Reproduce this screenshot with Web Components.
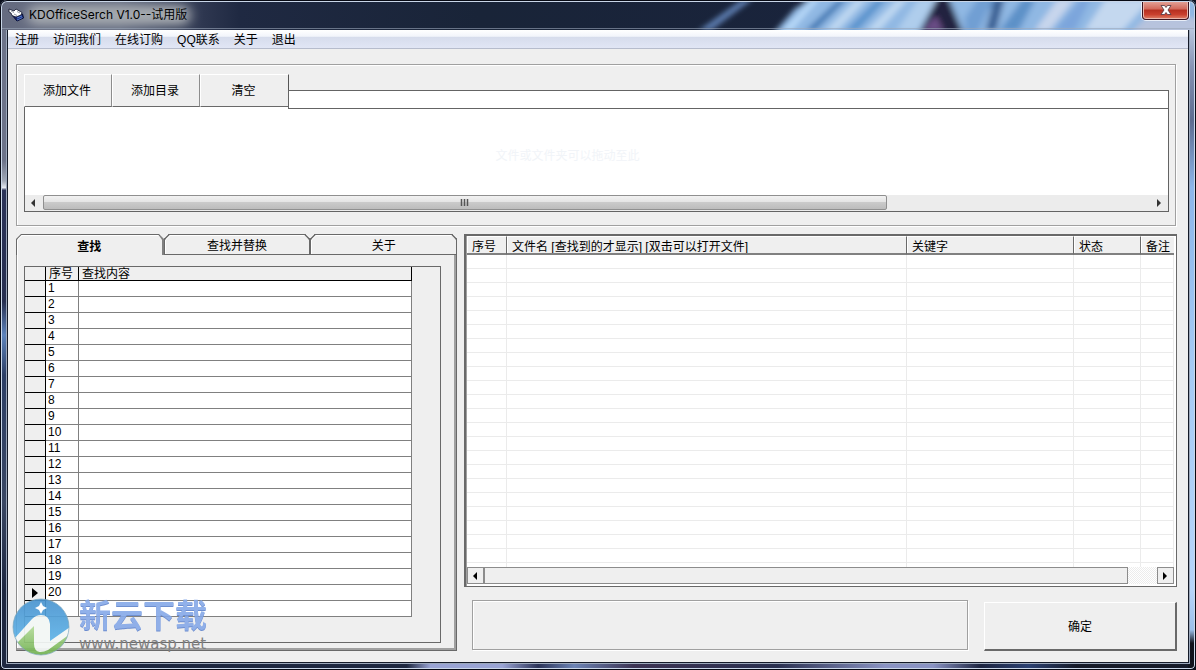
<!DOCTYPE html>
<html lang="zh-CN">
<head>
<meta charset="utf-8">
<title>KDOfficeSerch V1.0--试用版</title>
<style>
html{background:#0b0f1c}
body{margin:0;font:12px/16px "Liberation Sans","Noto Sans CJK SC",sans-serif;color:#000}
</style>
</head>
<body>
<kd-window>
  <kd-titlebar slot="title">KDOfficeSerch V1.0--试用版</kd-titlebar>
  <kd-menubar slot="menu" items="注册,访问我们,在线订购,QQ联系,关于,退出"></kd-menubar>
  <kd-file-group></kd-file-group>
  <kd-columns>
    <kd-tabs><kd-search-grid></kd-search-grid></kd-tabs>
    <kd-results slot="side"></kd-results>
    <kd-actions slot="side"></kd-actions>
  </kd-columns>
  <kd-watermark slot="overlay"></kd-watermark>
</kd-window>
<script>
const base = `*{box-sizing:border-box}button,input{font:inherit;color:inherit;margin:0;border-radius:0}`;
function define(name, render) {
  customElements.define(name, class extends HTMLElement {
    constructor() { super(); this.attachShadow({mode: "open"}); }
    connectedCallback() { this.shadowRoot.innerHTML = `<style>${base}</style>` + render(this); }
  });
}

define("kd-window", () => `
<style>
:host{display:flex;flex-direction:column;position:relative;min-height:100vh;box-sizing:border-box;padding:0 8px 8px;
 border-radius:7px 7px 5px 5px;overflow:hidden;
 background:
  linear-gradient(#6c7389 0 24%,#a0a8b6 27%,#e4e9f1 28%,#2b3358 28.4%,#272f50 45%,#5d83bb 50%,#2d3f66 56%,#3a4763 75%,#1d2740 88%) left/8px 100% no-repeat,
  linear-gradient(#c3d2e8 0 3%,#8693b4 10%,#5d6c90 18%,#8cb6ea 28%,#a5cbf5 55%,#b6d5fa 88%,#9cc0ea 94%,#10131d 96%) right/8px 100% no-repeat,
  linear-gradient(90deg,#1d2740 0 34%,#9aa4d4 36% 42%,#2b3358 45%,#6d84b5 48%,#3c3353 53%,#2a3050 65%,#8a93c3 74% 78%,#1c2440 82%,#2c4172 86%,#151a29 90%);}
.client{display:flex;flex-direction:column;flex:1;background:#efefef;outline:1px solid #141a28;box-shadow:0 0 0 2px #9ba7ba}
.content{display:flex;flex-direction:column;gap:8px;padding:15px 11px 11px 8px;flex:1}
.edge{position:absolute;inset:0;border:1px solid #070a14;border-radius:7px 7px 5px 5px;box-shadow:inset 0 0 0 1px #c9d6e8;pointer-events:none}
</style>
<slot name="title"></slot>
<main class="client"><slot name="menu"></slot><div class="content"><slot></slot></div></main>
<slot name="overlay"></slot><div class="edge"></div>`);

define("kd-titlebar", () => `
<style>
:host{display:flex;position:relative;height:30px;margin:0 -8px;padding-left:8px;align-items:center;font-family:Inter,"Noto Sans CJK SC",sans-serif;background:#1a2438}
.sky{position:absolute;inset:0;width:100%;height:100%}
.app{position:relative;width:16px;height:16px;margin-right:5px}
h1{position:relative;margin:0;font-size:12px;font-weight:400;line-height:20px}
button{position:absolute;right:7px;top:1px;width:47px;height:19px;padding:0;border:1px solid #3d1520;border-top:0;border-radius:0 0 4px 4px;
 box-shadow:inset 0 0 0 1px #e9b5ab,0 0 0 1px #e8eef8;background:linear-gradient(#e5a79c,#d2685a 45%,#b52f20 50%,#c9402e 75%,#e0826a);display:flex;justify-content:center;align-items:center}
</style>
<svg class="sky" viewBox="0 0 1196 30" preserveAspectRatio="none" aria-hidden="true">
<defs>
 <linearGradient id="b"><stop offset="0" stop-color="#656b80"/><stop offset=".1" stop-color="#656d81"/><stop offset=".17" stop-color="#2e3750"/><stop offset=".2" stop-color="#1f2942"/><stop offset=".4" stop-color="#192438"/><stop offset="1" stop-color="#1a2340"/></linearGradient>
 <filter id="g" x="-10%" width="120%" y="-60%" height="220%"><feGaussianBlur stdDeviation="6 4"/></filter>
 <filter id="f" x="-5%" width="110%" y="-50%" height="200%"><feGaussianBlur stdDeviation="3 2"/></filter>
</defs>
<rect width="1196" height="30" fill="url(#b)"/>
<rect x="28" y="5" width="162" height="20" rx="8" fill="#a3a7ae" filter="url(#g)"/>
<g filter="url(#f)">
 <path d="M699 30L741 0H752L712 30Z" fill="#5877a8"/>
 <path d="M773 34L806-4H1200V34Z" fill="#90b8e3"/>
 <path d="M783 30L812 0H818L792 30Z" fill="#b9daf9"/>
 <path d="M797 0H809L797 9Z" fill="#202340"/>
 <path d="M806 30L838 0H846L816 30Z" fill="#477cb6"/>
 <path d="M826 30L856 0H866L838 30ZM867 30L897 0H907L880 30Z" fill="#bdd7f1"/>
 <path d="M846 30L876 0H886L858 30Z" fill="#5c94ce"/>
 <path d="M897 30L918 0H936L918 30Z" fill="#afcdec"/>
 <path d="M919 33L938-3H948L963 33Z" fill="#242441"/>
 <path d="M923 30L936 15L943 30Z" fill="#6b4e86"/>
 <path d="M965 18L978-2H1010L988 10L978 32H965Z" fill="#719fd3"/>
 <path d="M986 30L994 0H1004L996 30Z" fill="#365b91"/>
 <path d="M1000 30L1022 0H1035L1019 30Z" fill="#5d91c8"/>
 <path d="M1035 30L1057 0H1074L1050 30Z" fill="#c7d5ec"/>
 <path d="M1055 30L1080 0H1090L1075 30Z" fill="#7ca5dc"/>
 <path d="M1085 30L1105 0H1150L1123 30Z" fill="#c4d8ef"/>
 <path d="M1130 34L1145 18H1200V34Z" fill="#b7c3dd"/>
</g>
<path d="M0 28.5H1196" stroke="#9ba7ba" opacity=".6"/>
</svg>
<svg class="app" viewBox="0 0 16 16" aria-hidden="true">
 <path d="M4 8L9 14L15.500 11L14.500 7L8 9Z" fill="#17246e" stroke="#070d36"/>
 <path d="M1 2L6 4L8 2L14 5.500L13 8L8 10L4 8.500L3 6L1 5Z" fill="#fff" stroke="#11162e" stroke-width=".8"/>
 <path d="M3 4L6 5.500M9 4.500L12 6M6 7L9 8.500" stroke="#68717f" stroke-width=".7"/>
 <path d="M9 11L14 9M9 13L14.500 10.500" stroke="#527cd0"/>
</svg>
<h1><slot></slot></h1>
<button type="button" aria-label="关闭"><svg width="12" height="10" viewBox="0 0 12 10"><path d="M1 .5H4.500L6 2.500L7.500.5H11L8 5L11 9.500H7.500L6 7.500L4.500 9.500H1L4 5Z" fill="#fff" stroke="#4b3340" stroke-width=".8"/></svg></button>`);

define("kd-menubar", el => `
<style>
:host{display:block}
nav{display:flex;gap:14px;height:19px;padding:0 7px;background:linear-gradient(#fff,#f2f5fb 35%,#d6dcec 40%,#e1e6f5);border-bottom:1px solid #b6bccc}
button{padding:2px 0 0;border:0;background:none;line-height:16px}
</style>
<nav aria-label="主菜单">${el.getAttribute("items").split(",").map(t => `<button type="button">${t}</button>`).join("")}</nav>`);

define("kd-file-group", () => `
<style>
:host{display:block;margin-right:1px;padding:9px 6px 13px 7px;border:1px solid #a0a0a0;box-shadow:inset 1px 1px #fff,1px 1px #fff;box-sizing:border-box}
.bar{display:flex;height:35px;position:relative}
.bar button{width:88px;height:33px;padding:0 2px 0 0;border:solid;border-width:1px;border-color:#fff #8c8c8c #696969 #fff;background:#efefef}
.bar button:last-of-type{width:89px;border-right-color:#555}
input{flex:1;min-width:0;height:19px;margin-top:16px;margin-left:-1px;padding:0 4px;border:1px solid #646464;background:#fff;outline:0}
.list{margin-top:-2px;background:#fff;border:1px solid #646464;border-top:0;display:flex;flex-direction:column}
.drop{margin:0;padding:41px 58px 31px 0;text-align:center;color:#f1f4f8}
.scroll{display:flex;height:16px;background:#ececec}
.arrow{width:18px;padding-right:3px;display:flex;align-items:center;justify-content:center}
.arrow:last-child{padding:0}
.track{flex:1;display:flex}
.thumb{width:76.2%;border:1px solid #8f8f8f;border-radius:2px;background:linear-gradient(#f2f2f2,#e4e4e4 45%,#cacaca 50%,#bcbcbc);display:flex;justify-content:center;align-items:center;height:15px}
</style>
<div class="bar"><button type="button">添加文件</button><button type="button">添加目录</button><button type="button">清空</button><input type="text" aria-label="文件路径"></div>
<div class="list"><p class="drop">文件或文件夹可以拖动至此</p>
<div class="scroll"><span class="arrow"><svg width="4" height="8"><path d="M4 0V8L0 4Z" fill="#333"/></svg></span>
<div class="track"><div class="thumb"><svg width="9" height="7"><path d="M1.5 0V7M4.5 0V7M7.5 0V7" stroke="#555" stroke-width="1.500"/></svg></div></div>
<span class="arrow"><svg width="4" height="8"><path d="M0 0V8L4 4Z" fill="#333"/></svg></span></div></div>`);

define("kd-columns", () => `
<style>
:host{display:grid;grid-template-columns:441fr 713fr;gap:7px;flex:1}
.side{display:flex;flex-direction:column;gap:13px;min-width:0}
</style>
<slot></slot><div class="side"><slot name="side"></slot></div>`);

define("kd-tabs", () => `
<style>
:host{display:flex;flex-direction:column;min-width:0}
.tabs{display:flex;height:21px}
button{flex:1;height:21px;padding:2px 0 0;background:#efefef;border:1px solid #696969;border-radius:5px 5px 0 0;corner-shape:bevel bevel square square;box-shadow:inset 1px 1px #fff}
button[aria-selected=true]{font-weight:700;border-bottom:0;border-right:2px solid #808080;border-left-color:#696969;padding-top:3px}
.panel{flex:1;display:flex;flex-direction:column;padding:11px 12px 4px 7px;border-left:1px solid #8c8c8c;border-right:1px solid #696969;border-bottom:1px solid #696969;box-shadow:inset -2px -2px #a0a0a0,inset 1px 0 #fff}
</style>
<div class="tabs" role="tablist"><button role="tab" aria-selected="true">查找</button><button role="tab" aria-selected="false">查找并替换</button><button role="tab" aria-selected="false">关于</button></div>
<div class="panel" role="tabpanel"><slot></slot></div>`);

define("kd-search-grid", () => `
<style>
:host{display:block;flex:1;box-sizing:border-box;border:1px solid #696969;padding:0 28px 25px 0;margin:0 3px 3px 0}
table{width:100%;border-spacing:0;table-layout:fixed}
th,td{padding:0 0 0 2px;height:16px;line-height:15px;font-weight:400;text-align:left;overflow:hidden;white-space:nowrap;border-right:1px solid #808080;border-bottom:1px solid #808080}
td{background:#fff;vertical-align:top}
thead th{height:14px;padding-top:2px;padding-left:3px;line-height:11px;background:#efefef;border-color:#000}
tbody th{border-color:#000;background:#efefef;padding:0}
col.m{width:21px}col.n{width:33px}
svg{display:block;margin:0 0 0 7px}
</style>
<table><colgroup><col class="m"><col class="n"><col></colgroup>
<thead><tr><th aria-label="当前行"></th><th>序号</th><th>查找内容</th></tr></thead>
<tbody>${Array.from({length: 21}, (_, i) => `<tr><th>${i === 19 ? '<svg width="6" height="10"><path d="M0 0L6 5L0 10Z"/></svg>' : ""}</th><td>${i < 20 ? i + 1 : ""}</td><td></td></tr>`).join("")}</tbody></table>`);

define("kd-results", () => `
<style>
:host{display:flex;flex-direction:column;flex:1;box-sizing:border-box;background:#fff;border:solid;border-width:2px 1px 1px 2px;border-color:#696969;box-shadow:inset 1px 0 #a0a0a0;padding:0 2px 2px 1px}
table{width:100%;border-spacing:0;table-layout:fixed}
th{height:19px;padding:4px 0 0 5px;font-weight:400;text-align:left;line-height:12px;background:#efefef;border-right:1px solid #696969;border-bottom:2px solid #808080;border-top:1px solid #fff;box-shadow:inset 1px 0 #fff;white-space:nowrap;overflow:hidden}
th:last-child{border-right:0}
td{height:14px;padding:0;border-right:1px solid #ebebeb;border-bottom:1px solid #ebebeb}
.part td{height:4px;border-bottom:0}
.scroll{display:flex;height:17px;margin-top:auto;background:repeating-conic-gradient(#fff 0 25%,#ececec 0 50%) 0 0/2px 2px}
.scroll button,.thumb{border:1px solid #8c8c8c;background:#efefef}
.scroll button{width:17px;padding:0 2px 0 0;display:flex;align-items:center;justify-content:center}
.scroll button:last-child{padding:0}
.track{flex:1}.thumb{width:95.7%;height:17px}
</style>
<table><colgroup><col style="width:40px"><col><col style="width:167px"><col style="width:67px"><col style="width:33px"></colgroup>
<thead><tr><th>序号</th><th>文件名 [查找到的才显示] [双击可以打开文件]</th><th>关键字</th><th>状态</th><th>备注</th></tr></thead>
<tbody>${Array.from({length: 23}, (_, i) => `<tr${i === 22 ? ' class="part"' : ""}>${"<td></td>".repeat(5)}</tr>`).join("")}</tbody></table>
<div class="scroll"><button type="button" aria-label="向左滚动"><svg width="5" height="8"><path d="M5 0V8L1 4Z"/></svg></button><div class="track"><div class="thumb"></div></div><button type="button" aria-label="向右滚动"><svg width="5" height="8"><path d="M0 0V8L4 4Z"/></svg></button></div>`);

define("kd-actions", () => `
<style>
:host{display:flex;gap:16px;padding-left:8px}
.status{flex:1;height:50px;border:1px solid #a0a0a0;box-shadow:inset 1px 1px #fff,1px 1px #fff}
button{width:193px;height:49px;margin-top:2px;padding:2px 0 0;background:#efefef;border:solid;border-width:1px 2px 2px 1px;border-color:#fff #696969 #696969 #fff}
</style>
<div class="status" role="status"></div><button type="button">确定</button>`);

define("kd-watermark", () => `
<style>
:host{position:absolute;left:12px;bottom:14px;display:flex;align-items:flex-end;gap:9px;pointer-events:none}
.name{font:700 32px/30px "Liberation Sans","Noto Sans CJK SC",sans-serif;color:#86a9e8;opacity:.9;text-shadow:0 1px #5f83cc}
.url{margin:6px 0 5px;font:15px/14px "DejaVu Sans",sans-serif;color:#808080}
</style>
<svg width="58" height="58" viewBox="0 0 58 58" aria-hidden="true">
 <defs><linearGradient id="u" x2="0" y2="1"><stop offset="0" stop-color="#4a93cf"/><stop offset="1" stop-color="#5fb4e8"/></linearGradient>
 <linearGradient id="v" x2="0" y2="1"><stop offset="0" stop-color="#b5dd9b"/><stop offset="1" stop-color="#6fb04e"/></linearGradient>
 <clipPath id="c"><circle cx="29" cy="29" r="28"/></clipPath></defs>
 <g clip-path="url(#c)" opacity=".92">
  <path d="M0 0H58V58H0Z" fill="#f4f8f6"/>
  <path d="M0 0H58V29L38 43V26Q37 17 29 17Q24 17 20 21L2 41H0Z" fill="url(#u)"/>
  <path d="M4 46L22 28V46Q22 53 28 54Q32 54 36 52L58 36V58H0V46Z" fill="url(#v)"/>
 </g>
 <circle cx="29" cy="29" r="28" fill="none" stroke="#7da8bd" opacity=".7"/>
 <path d="M29 4L31 8L35 10L31 12L29 16L27 12L23 10L27 8Z" fill="#fff"/>
</svg>
<div><div class="name">新云下载</div><div class="url">www.newasp.net</div></div>`);
</script>
</body>
</html>
